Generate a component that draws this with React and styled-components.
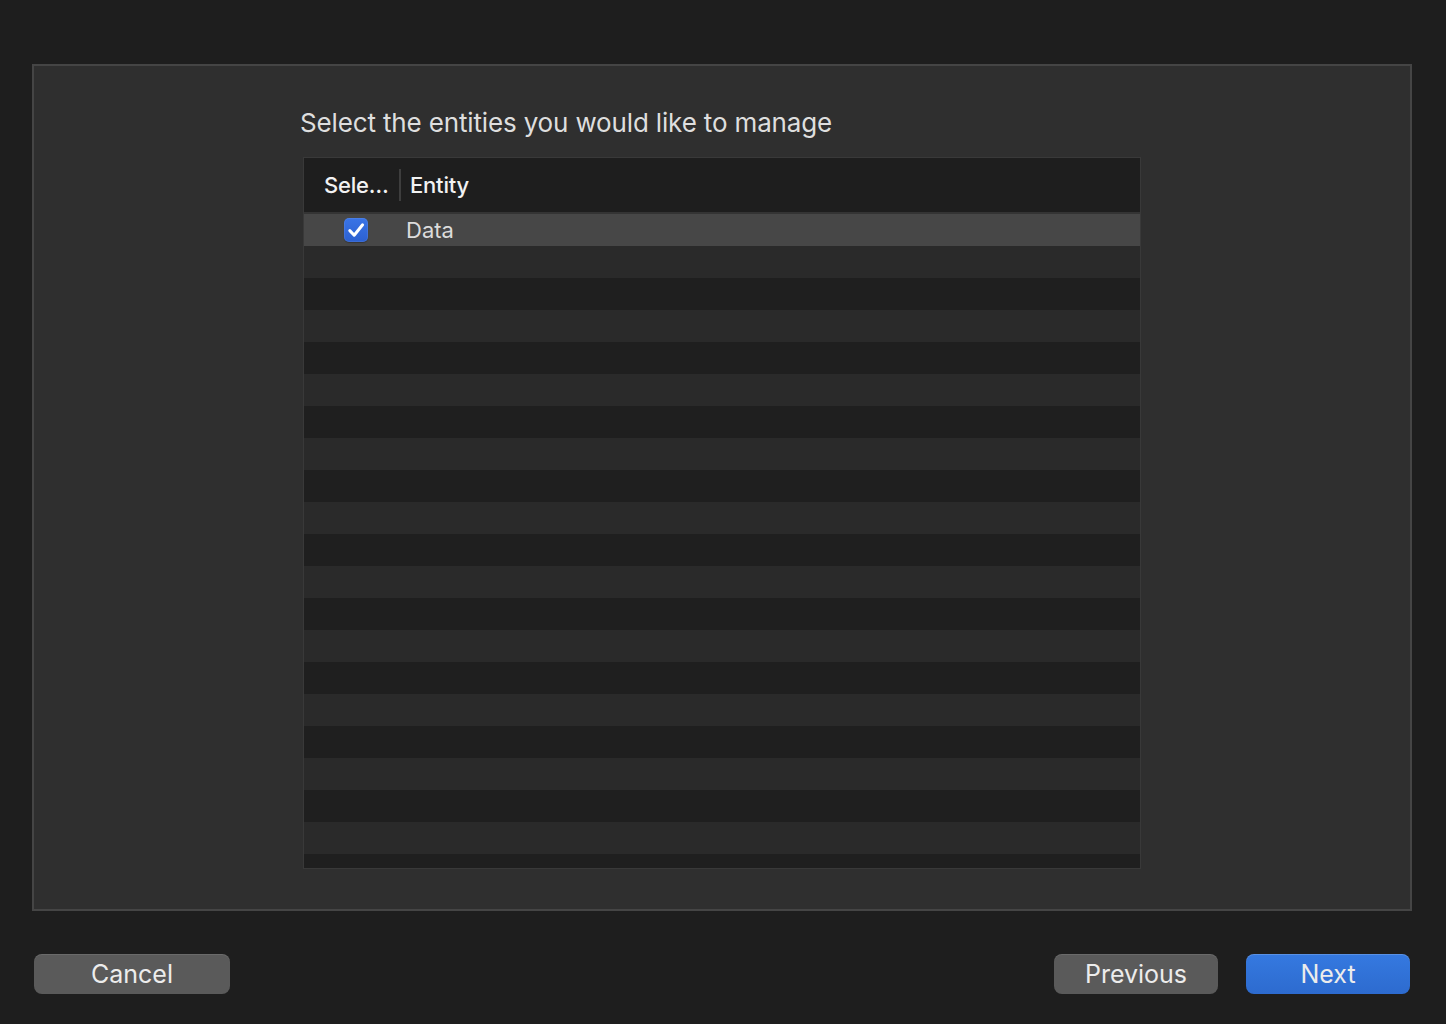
import React from 'react'
import styled, { createGlobalStyle } from 'styled-components'

const Global = createGlobalStyle`
    html, body {
        margin: 0;
        padding: 0;
        background: #1e1e1e;
    }
    body {
        font-family: Inter, "Noto Sans", "Liberation Sans", sans-serif;
        -webkit-font-smoothing: antialiased;
    }
`;

const Page = styled.div`
    width: 1446px;
    height: 1024px;
    box-sizing: border-box;
    padding: 64px 34px 0 32px;
    display: flex;
    flex-direction: column;
`;

const Panel = styled.div`
    height: 847px;
    box-sizing: border-box;
    border: 2px solid #454545;
    background: #2f2f2f;
    display: flex;
    justify-content: center;
`;

const Content = styled.div`
    width: 844px;
    padding-top: 41px;
    display: flex;
    flex-direction: column;
`;

const Title = styled.div`
    font-size: 26px;
    line-height: 32px;
    letter-spacing: -0.15px;
    color: #dedede;
    height: 32px;
`;

const Table = styled.div`
    margin: 18px 3px 0;
    height: 712px;
    box-sizing: border-box;
    border: 1px solid #393939;
    overflow: hidden;
    display: flex;
    flex-direction: column;
`;

const Header = styled.div`
    height: 54px;
    flex: none;
    background: #1e1e1e;
    display: flex;
    align-items: center;
    border-bottom: 2px solid #343434;
`;

const HeadCell = styled.div`
    width: ${p => p.$width || 'auto'};
    box-sizing: border-box;
    padding-left: ${p => p.$pad || 0}px;
    font-size: 22px;
    font-weight: 500;
    letter-spacing: -0.2px;
    color: #f2f2f2;
    white-space: nowrap;
`;

const Divider = styled.div`
    width: 2px;
    height: 32px;
    background: #3e3e3e;
    margin-right: 9px;
`;

const Row = styled.div`
    height: 32px;
    flex: none;
    display: flex;
    align-items: center;
    background: ${p => p.$selected ? '#474747' : p.$odd ? '#2a2a2a' : '#1f1f1f'};
`;

const CheckCell = styled.div`
    width: 102px;
    display: flex;
    justify-content: center;
    padding-left: 2px;
    box-sizing: border-box;
`;

const Check = styled.div`
    width: 24px;
    height: 24px;
    border-radius: 5px;
    background: linear-gradient(#3a74e6, #2c60d0);
    display: flex;
    align-items: center;
    justify-content: center;
    box-shadow: inset 0 0 0 1px rgba(255,255,255,.08), 0 1px 1px rgba(0,0,0,.25);
`;

const Cell = styled.div`
    font-size: 22px;
    color: #dcdcdc;
`;

const Footer = styled.div`
    margin-top: 43px;
    padding: 0 2px;
    display: flex;
    align-items: center;
`;

const Spacer = styled.div`
    flex: 1;
`;

const Button = styled.button`
    width: ${p => p.$width}px;
    height: 40px;
    margin-left: ${p => p.$gap || 0}px;
    border: none;
    border-radius: 8px;
    font-family: inherit;
    font-size: 25px;
    color: #ececec;
    background: ${p => p.$primary ? 'linear-gradient(#3579e0, #2d6bcf)' : '#5a5a5a'};
    box-shadow: inset 0 1px 0 ${p => p.$primary ? 'rgba(255,255,255,.18)' : 'rgba(255,255,255,.1)'};
    padding: 0;
`;

export default function App() {
    const rows = Array.from({ length: 20 });
    return (
        <Page>
            <Global />
            <Panel>
                <Content>
                    <Title>Select the entities you would like to manage</Title>
                    <Table>
                        <Header>
                            <HeadCell $width="95px" $pad={20}>Sele…</HeadCell>
                            <Divider />
                            <HeadCell>Entity</HeadCell>
                        </Header>
                        <Row $selected>
                            <CheckCell>
                                <Check>
                                    <svg width="24" height="24" viewBox="0 0 24 24" fill="none">
                                        <path d="M5.8 12.6 L10.2 17.2 L18.6 6.8" stroke="#fff" strokeWidth="3" strokeLinecap="round" strokeLinejoin="round" />
                                    </svg>
                                </Check>
                            </CheckCell>
                            <Cell>Data</Cell>
                        </Row>
                        {rows.map((_, i) => (
                            <Row key={i} $odd={i % 2 === 0} />
                        ))}
                    </Table>
                </Content>
            </Panel>
            <Footer>
                <Button $width={196}>Cancel</Button>
                <Spacer />
                <Button $width={164}>Previous</Button>
                <Button $width={164} $gap={28} $primary>Next</Button>
            </Footer>
        </Page>
    )
}
